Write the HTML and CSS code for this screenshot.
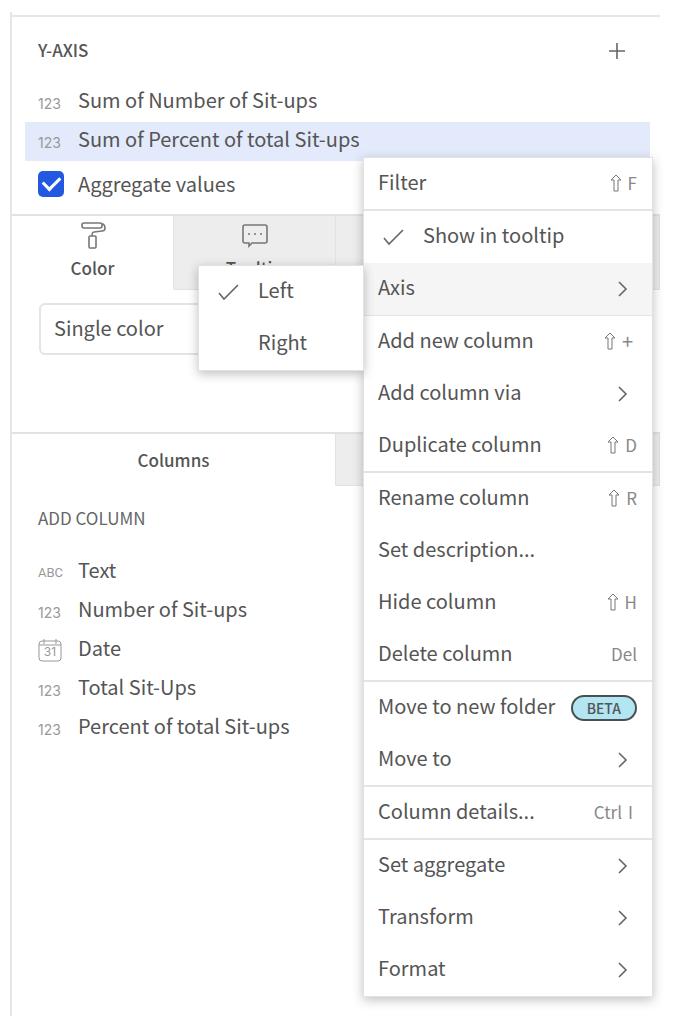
FILE: index.html
```html
<!DOCTYPE html>
<html lang="en">
<head>
    <meta charset="UTF-8">
    <meta name="viewport" content="width=device-width, initial-scale=1.0">
    <title>Chart Editor</title>
    <link rel="stylesheet" href="styles.css">
</head>
<body>
    <svg class="sprite" aria-hidden="true">
        <symbol id="chevron" viewBox="0 0 12 18"><path d="M2 2l7 7-7 7"/></symbol>
        <symbol id="check" viewBox="0 0 22 18"><path d="M1 10l5 6L20 2"/></symbol>
        <symbol id="shift" viewBox="0 0 12 18"><path d="M6 1l5 5H8v11H4V6H1z"/></symbol>
    </svg>

    <main class="panel">
        <section class="y-axis">
            <header class="section-header">
                <h2>Y-AXIS</h2>
                <button type="button" class="add-btn" aria-label="Add">
                    <svg width="18" height="18" viewBox="0 0 18 18"><path d="M9 1v16M1 9h16"/></svg>
                </button>
            </header>
            <ul class="field-list">
                <li class="field"><span class="type">123</span>Sum of Number of Sit-ups</li>
                <li class="field selected">
                    <span class="type">123</span>Sum of Percent of total Sit-ups
                    <div class="menu column-menu" role="menu">
                        <div class="menu-group">
                            <button type="button" class="menu-item" role="menuitem">Filter<kbd><svg><use href="#shift"/></svg>F</kbd></button>
                        </div>
                        <div class="menu-group">
                            <button type="button" class="menu-item" role="menuitem"><svg class="check"><use href="#check"/></svg>Show in tooltip</button>
                            <div class="has-submenu">
                                <button type="button" class="menu-item active" role="menuitem">Axis<svg class="chevron"><use href="#chevron"/></svg></button>
                                <div class="menu submenu" role="menu">
                                    <button type="button" class="menu-item" role="menuitem"><svg class="check"><use href="#check"/></svg>Left</button>
                                    <button type="button" class="menu-item" role="menuitem"><span class="check"></span>Right</button>
                                </div>
                            </div>
                        </div>
                        <div class="menu-group">
                            <button type="button" class="menu-item" role="menuitem">Add new column<kbd><svg><use href="#shift"/></svg><span class="plus">+</span></kbd></button>
                            <button type="button" class="menu-item" role="menuitem">Add column via<svg class="chevron"><use href="#chevron"/></svg></button>
                            <button type="button" class="menu-item" role="menuitem">Duplicate column<kbd><svg><use href="#shift"/></svg>D</kbd></button>
                        </div>
                        <div class="menu-group">
                            <button type="button" class="menu-item" role="menuitem">Rename column<kbd><svg><use href="#shift"/></svg>R</kbd></button>
                            <button type="button" class="menu-item" role="menuitem">Set description...</button>
                            <button type="button" class="menu-item" role="menuitem">Hide column<kbd><svg><use href="#shift"/></svg>H</kbd></button>
                            <button type="button" class="menu-item" role="menuitem">Delete column<kbd>Del</kbd></button>
                        </div>
                        <div class="menu-group">
                            <button type="button" class="menu-item" role="menuitem">Move to new folder<span class="beta">BETA</span></button>
                            <button type="button" class="menu-item" role="menuitem">Move to<svg class="chevron"><use href="#chevron"/></svg></button>
                        </div>
                        <div class="menu-group">
                            <button type="button" class="menu-item" role="menuitem">Column details...<kbd class="combo"><span>Ctrl</span><span>I</span></kbd></button>
                        </div>
                        <div class="menu-group">
                            <button type="button" class="menu-item" role="menuitem">Set aggregate<svg class="chevron"><use href="#chevron"/></svg></button>
                            <button type="button" class="menu-item" role="menuitem">Transform<svg class="chevron"><use href="#chevron"/></svg></button>
                            <button type="button" class="menu-item" role="menuitem">Format<svg class="chevron"><use href="#chevron"/></svg></button>
                        </div>
                    </div>
                </li>
            </ul>
            <label class="aggregate" for="aggregate">
                <input type="checkbox" id="aggregate" checked>Aggregate values
            </label>
        </section>

        <section class="format">
            <div class="tabs format-tabs" role="tablist">
                <button type="button" class="tab current" role="tab" aria-selected="true">
                    <svg width="26" height="28" viewBox="0 0 26 28"><rect x="2" y="2" width="20" height="5" rx="2"/><path d="M22 3h1q2 1 2 4t-3 3l-8 1q-2 0-2 4"/><rect x="9" y="15" width="7" height="12" rx="1"/></svg>
                    Color
                </button>
                <button type="button" class="tab" role="tab">
                    <svg width="26" height="28" viewBox="0 0 26 28"><path d="M3 4h20q2 0 2 2v14q0 2-2 2H10l-3 3v-3H3q-2 0-2-2V6q0-2 2-2z"/><path d="M6 13h2M12 13h2M18 13h2"/></svg>
                    Tooltip
                </button>
                <button type="button" class="tab" role="tab" aria-label="Labels"></button>
                <button type="button" class="tab" role="tab" aria-label="Format"></button>
            </div>
            <div class="format-body">
                <select aria-label="Color mode">
                    <option>Single color</option>
                </select>
            </div>
        </section>

        <section class="columns">
            <div class="tabs column-tabs" role="tablist">
                <button type="button" class="tab current" role="tab" aria-selected="true">Columns</button>
                <button type="button" class="tab" role="tab" aria-label="Metrics"></button>
            </div>
            <h3>ADD COLUMN</h3>
            <ul class="field-list">
                <li class="field"><span class="type abc">ABC</span>Text</li>
                <li class="field"><span class="type">123</span>Number of Sit-ups</li>
                <li class="field">
                    <span class="type date">
                        <svg width="24" height="24" viewBox="0 0 24 24"><rect x="1" y="3" width="22" height="20" rx="3"/><path d="M1 7h22M6 1v5M18 1v5"/></svg>
                        <span>31</span>
                    </span>Date
                </li>
                <li class="field"><span class="type">123</span>Total Sit-Ups</li>
                <li class="field"><span class="type">123</span>Percent of total Sit-ups</li>
            </ul>
        </section>
    </main>
</body>
</html>
```

FILE: styles.css
```css
* {
    box-sizing: border-box;
}
body {
    margin: 0;
    padding: 12px 20px 8px 10px;
    background: #fff;
    color: #555;
    font-family: "Noto Sans CJK SC", "Noto Sans", sans-serif;
    font-size: 20px;
    line-height: 26px;
}
button, select {
    font: inherit;
    color: inherit;
    cursor: pointer;
}
svg {
    fill: none;
    stroke: #666;
    stroke-width: 1.6px;
}
h2, h3, ul {
    margin: 0;
    padding: 0;
}
.sprite {
    display: none;
}
.panel {
    min-height: calc(100vh - 20px);
    padding-top: 3px;
    border-left: 2px solid #e6e6e6;
}
.y-axis {
    border-top: 2px solid #e6e6e6;
    padding: 14px 10px 13px 13px;
}
.section-header {
    display: flex;
    align-items: center;
    justify-content: space-between;
    height: 40px;
    padding: 0 24px 0 13px;
    margin-bottom: 12px;
}
h2 {
    padding-bottom: 2px;
    font-size: 17px;
    font-weight: 500;
}
.add-btn {
    display: flex;
    padding: 0;
    border: none;
    background: none;
}
.field-list {
    list-style: none;
}
.field {
    position: relative;
    display: flex;
    align-items: center;
    height: 39px;
    padding: 0 0 6px 13px;
    white-space: nowrap;
}
.field.selected {
    background: #e3eafb;
}
.type {
    width: 40px;
    padding-top: 8px;
    color: #999;
    font-family: Inter, sans-serif;
    font-size: 14px;
}
.abc {
    padding-top: 6px;
    font-family: Roboto, sans-serif;
    font-size: 13px;
}
.date {
    position: relative;
    display: flex;
    align-items: center;
    padding-top: 4px;
}
.date svg {
    stroke: #999;
    stroke-width: 1px;
}
.date span {
    position: absolute;
    left: 0;
    top: 6px;
    width: 24px;
    font-size: 12px;
    line-height: 24px;
    text-align: center;
}
.aggregate {
    display: flex;
    align-items: center;
    gap: 14px;
    height: 40px;
    padding: 5px 0 0 13px;
}
.aggregate input {
    appearance: none;
    display: flex;
    align-items: center;
    justify-content: center;
    width: 26px;
    height: 26px;
    margin: 0;
    border-radius: 5px;
    background: #2359e0;
}
.aggregate input::after {
    content: "";
    width: 14px;
    height: 8px;
    margin-bottom: 4px;
    border-left: 3px solid #fff;
    border-bottom: 3px solid #fff;
    rotate: -45deg;
}

/* tabs */
.tabs {
    display: flex;
    border-top: 2px solid #e2e2e2;
}
.tab {
    flex: 1;
    display: flex;
    flex-direction: column;
    align-items: center;
    padding: 0;
    border: solid #e2e2e2;
    border-width: 0 1px 1px 0;
    background: #ededed;
    font-size: 17px;
    font-weight: 500;
}
.tab.current {
    border-bottom-color: transparent;
    background: #fff;
}
.tab svg {
    margin: 5px 0 6px;
    stroke: #777;
}
.format-tabs {
    height: 76px;
}
.format-body {
    padding: 13px 27px 77px;
}
select {
    appearance: none;
    display: block;
    width: 100%;
    height: 52px;
    padding: 0 14px 2px 13px;
    border: 2px solid #e4e4e4;
    border-radius: 6px;
    background: #fff;
}
.column-tabs {
    height: 54px;
}
.column-tabs .tab {
    justify-content: center;
}
.columns h3 {
    padding: 19px 26px 22px;
    font-size: 17px;
    font-weight: 400;
    color: #666;
}
.columns .field {
    padding-left: 26px;
}

/* context menus */
.menu {
    position: absolute;
    background: #fff;
    border: 1px solid #e2e2e2;
    box-shadow: 0 3px 10px rgba(0, 0, 0, 0.25);
}
.column-menu {
    z-index: 1;
    top: 35px;
    right: -3px;
    width: 290px;
}
.menu-group + .menu-group {
    margin-top: -1px;
    border-top: 2px solid #e4e4e4;
}
.menu-item {
    display: flex;
    align-items: center;
    width: 100%;
    height: 52px;
    padding: 0 15px 4px 14px;
    border: none;
    background: none;
    text-align: left;
}
.menu-item.active {
    background: #f5f5f5;
}
.menu-item .chevron {
    width: 12px;
    height: 18px;
    margin: 4px 8px 0 auto;
}
.menu-item .check {
    width: 22px;
    height: 18px;
    margin: 4px 18px 0 5px;
}
.menu-item kbd {
    display: flex;
    align-items: center;
    gap: 6px;
    margin: 2px 0 0 auto;
    font-family: inherit;
    font-size: 17px;
    color: #888;
}
.menu-item kbd svg {
    width: 12px;
    height: 18px;
    stroke: #777;
    stroke-width: 1px;
}
.menu-item .plus {
    padding-right: 4px;
    font-size: 20px;
}
.menu-item .combo {
    padding-right: 4px;
}
.has-submenu {
    position: relative;
}
.submenu {
    top: 2px;
    right: 100%;
    width: 166px;
}
.beta {
    margin: 4px 0 0 auto;
    padding: 0 14px;
    border: 2px solid #4a4f52;
    border-radius: 13px;
    background: #b2e6f2;
    font-size: 14px;
    font-weight: 500;
    line-height: 22px;
}
```
